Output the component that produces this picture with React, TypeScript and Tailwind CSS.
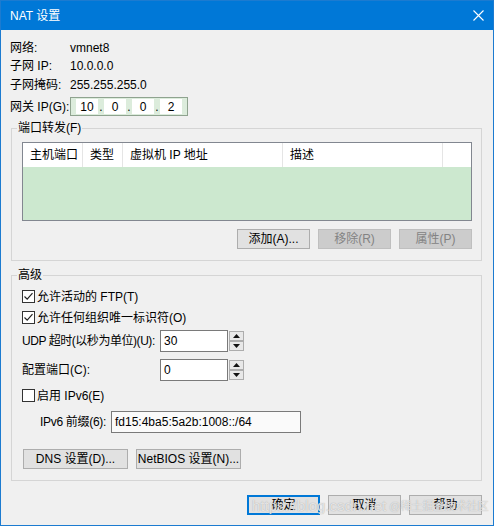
import React from 'react';

const FONT = "font-['Liberation_Sans','Noto_Sans_CJK_SC',sans-serif]";

// 复选框
const CheckBox = ({ checked }: { checked?: boolean }) => (
  <span className="w-[13px] h-[13px] border border-[#333333] bg-white flex items-center justify-center shrink-0">
    {checked && (
      <svg width="11" height="11" viewBox="0 0 11 11">
        <path d="M1.5 5.5 L4.2 8.2 L9.5 2.2" fill="none" stroke="#222" strokeWidth="1.2" />
      </svg>
    )}
  </span>
);

type BtnProps = { label: string; disabled?: boolean; focused?: boolean; wide?: boolean };

const Btn = ({ label, disabled, focused, wide }: BtnProps) => {
  let look = 'bg-[#e1e1e1] border border-[#adadad] text-black';
  if (disabled) look = 'bg-[#cccccc] border border-[#bfbfbf] text-[#838383]';
  if (focused) look = 'bg-[#e1e1e1] border-2 border-[#0078d7] text-black';
  return (
    <div className={`${wide ? 'w-[105px]' : 'w-[73px]'} h-[20px] shrink-0 flex items-center justify-center leading-none whitespace-nowrap ${look}`}>
      {label}
    </div>
  );
};

const SpinBox = ({ value }: { value: string }) => (
  <div className="flex h-[22px] shrink-0">
    <div className="w-[68px] h-[22px] border border-[#7a7a7a] bg-white pl-[3px] flex items-center">{value}</div>
    <div className="flex flex-col py-[1px] ml-[1px]">
      <div className="w-[15px] h-[10px] border border-[#adadad] bg-[#e8e8e8] flex items-center justify-center">
        <svg width="7" height="4" viewBox="0 0 7 4"><path d="M0 4 L3.5 0 L7 4Z" fill="#111" /></svg>
      </div>
      <div className="w-[15px] h-[10px] border border-[#adadad] bg-[#e8e8e8] flex items-center justify-center">
        <svg width="7" height="4" viewBox="0 0 7 4"><path d="M0 0 L3.5 4 L7 0Z" fill="#111" /></svg>
      </div>
    </div>
  </div>
);

const COLS = [
  { title: '主机端口', w: 'w-[60px]' },
  { title: '类型', w: 'w-[40px]' },
  { title: '虚拟机 IP 地址', w: 'w-[160px]' },
  { title: '描述', w: 'w-[160px]' },
];

const IP_PARTS = ['10', '0', '0', '2'];

export default function App() {
  return (
    <div className={`relative w-[494px] h-[526px] border border-[#1c7bd0] bg-[#f0f0f0] flex flex-col text-[12px] text-black whitespace-nowrap ${FONT}`}>
      {/* 标题栏 */}
      <div className="h-[29px] bg-[#0078d7] text-white flex items-center justify-between pl-[9px] pr-[9px] shrink-0">
        <span className="leading-[16px]">NAT 设置</span>
        <svg width="11" height="11" viewBox="0 0 11 11">
          <path d="M0.5 0.5 L10.5 10.5 M10.5 0.5 L0.5 10.5" stroke="#fff" strokeWidth="1.1" />
        </svg>
      </div>

      <div className="flex-1 flex flex-col pl-[10px] pr-[11px] pt-[9px]">
        {/* 基本信息 */}
        <div className="-ml-[1px] flex flex-col">
          <div className="h-[18px] flex items-center"><span className="w-[60px]">网络:</span><span>vmnet8</span></div>
          <div className="h-[18px] flex items-center"><span className="w-[60px]">子网 IP:</span><span>10.0.0.0</span></div>
          <div className="h-[19px] flex items-center"><span className="w-[60px]">子网掩码:</span><span>255.255.255.0</span></div>
          <div className="mt-[3px] h-[19px] flex items-center">
            <span className="w-[60px]">网关 IP(G):</span>
            <div className="w-[118px] h-[19px] border border-[#8fa38f] bg-[#dcecdc] flex items-center pl-[5px] gap-[1px]">
              {IP_PARTS.map((p, i) => (
                <React.Fragment key={i}>
                  {i > 0 && <span className="w-[4px] text-center leading-none">.</span>}
                  <span className="w-[22px] h-[15px] bg-white flex items-center justify-center leading-none">{p}</span>
                </React.Fragment>
              ))}
            </div>
          </div>
        </div>

        {/* 端口转发 */}
        <fieldset className="mt-[4px] border border-[#d5d5d5] p-0 m-0 min-w-0">
          <legend className="ml-[5px] px-[1px] leading-[16px]">端口转发(F)</legend>
          <div className="pl-[10px] pr-[9px] pt-[6px] pb-[11px] flex flex-col">
            <div className="h-[79px] border border-[#828790] flex flex-col">
              <div className="h-[24px] bg-white flex shrink-0">
                {COLS.map((c) => (
                  <div key={c.title} className={`${c.w} h-full border-r border-[#e5e5e5] flex items-center pl-[7px]`}>
                    {c.title}
                  </div>
                ))}
                <div className="flex-1" />
              </div>
              <div className="flex-1 bg-[#cce8cf]" />
            </div>
            <div className="mt-[8px] flex justify-end gap-[8px]">
              <Btn label="添加(A)..." />
              <Btn label="移除(R)" disabled />
              <Btn label="属性(P)" disabled />
            </div>
          </div>
        </fieldset>

        {/* 高级 */}
        <fieldset className="mt-[6px] border border-[#d5d5d5] p-0 m-0 min-w-0">
          <legend className="ml-[5px] px-[1px] leading-[16px]">高级</legend>
          <div className="pl-[10px] pr-[9px] pt-[3px] pb-[11px] flex flex-col">
            <div className="h-[21px] flex items-center gap-[2px]"><CheckBox checked /><span>允许活动的 FTP(T)</span></div>
            <div className="h-[21px] flex items-center gap-[2px]"><CheckBox checked /><span>允许任何组织唯一标识符(O)</span></div>
            <div className="mt-[2px] flex items-center">
              <span className="w-[138px] shrink-0 tracking-[-0.45px]">UDP 超时(以秒为单位)(U):</span>
              <SpinBox value="30" />
            </div>
            <div className="mt-[7px] flex items-center">
              <span className="w-[138px] shrink-0">配置端口(C):</span>
              <SpinBox value="0" />
            </div>
            <div className="mt-[4px] h-[21px] flex items-center gap-[2px]"><CheckBox /><span>启用 IPv6(E)</span></div>
            <div className="mt-[5px] flex items-center pl-[18px]">
              <span className="w-[71px] shrink-0 tracking-[-0.3px]">IPv6 前缀(6):</span>
              <div className="w-[190px] h-[22px] border border-[#7a7a7a] bg-[#fafafa] pl-[3px] flex items-center">fd15:4ba5:5a2b:1008::/64</div>
            </div>
            <div className="mt-[16px] flex gap-[8px] pl-[1px]">
              <Btn label="DNS 设置(D)..." wide />
              <Btn label="NetBIOS 设置(N)..." wide />
            </div>
          </div>
        </fieldset>

        {/* 底部按钮 */}
        <div className="mt-[14px] flex justify-end gap-[8px]">
          <Btn label="确定" focused />
          <Btn label="取消" />
          <Btn label="帮助" />
        </div>
      </div>

      {/* 水印 */}
      <div className="absolute left-[251px] top-[496px] flex items-center gap-[3px] pointer-events-none text-white/70 [text-shadow:0_0_1px_#999]">
        <span className="text-[15px] leading-[18px]">https://blog.csdn.net</span>
        <span className="text-[11px] leading-[18px]">@稀土掘金技术社区</span>
      </div>
    </div>
  );
}
